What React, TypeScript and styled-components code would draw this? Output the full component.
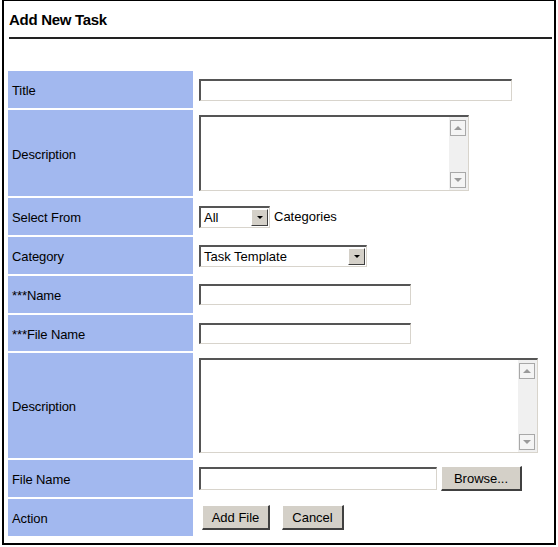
import React from 'react'
import styled, { createGlobalStyle } from 'styled-components'

const GlobalStyle = createGlobalStyle`
  html, body {
    margin: 0;
    padding: 0;
    background: #ffffff;
  }
  body {
    font-family: 'Liberation Sans', Arial, sans-serif;
    color: #000000;
  }
`

const Frame = styled.div`
  box-sizing: border-box;
  width: 554px;
  height: 545px;
  margin-left: 2px;
  border: 2px solid #000000;
  border-top-width: 1px;
  padding: 8px 2px 0 4px;
`

const Header = styled.h1`
  margin: 0 0 0 1px;
  font-size: 15px;
  font-weight: bold;
  line-height: 22px;
  letter-spacing: -0.3px;
`

const Rule = styled.hr`
  margin: 6px 0 0 1px;
  height: 0;
  border: none;
  border-top: 2px solid #222222;
`

const Form = styled.div`
  display: flex;
  flex-direction: column;
  gap: 2px;
  margin-top: 32px;
  width: 545px;
`

const Row = styled.div<{ $h: number }>`
  display: grid;
  grid-template-columns: 185px 1fr;
  column-gap: 2px;
  height: ${({ $h }) => $h}px;
`

const Label = styled.div`
  display: flex;
  align-items: center;
  padding: 2px 0 0 4px;
  background: #a2b8ef;
  font-size: 13px;
  letter-spacing: -0.1px;
`

const Cell = styled.div`
  display: flex;
  align-items: center;
  gap: 4px;
  padding-left: 4px;
  font-size: 13px;
`

const insetBorder = `
  box-sizing: border-box;
  border-top: 2px solid #555555;
  border-left: 2px solid #555555;
  border-right: 1px solid #d8d4cc;
  border-bottom: 1px solid #d8d4cc;
  background: #ffffff;
`

const TextInput = styled.input<{ $w: number; $h?: number }>`
  ${insetBorder}
  width: ${({ $w }) => $w}px;
  height: ${({ $h }) => $h ?? 22}px;
  padding: 0 3px;
  font: inherit;
  outline: none;
`

const AreaBox = styled.div<{ $w: number; $h: number }>`
  ${insetBorder}
  display: flex;
  width: ${({ $w }) => $w}px;
  height: ${({ $h }) => $h}px;
`

const AreaField = styled.textarea`
  flex: 1;
  border: none;
  outline: none;
  resize: none;
  font: inherit;
  padding: 2px;
`

const ScrollTrack = styled.div`
  display: flex;
  flex-direction: column;
  justify-content: space-between;
  width: 17px;
  background: #f0f0f0;
  padding: 3px 1px 2px 1px;
`

const ScrollButton = styled.div`
  display: flex;
  align-items: center;
  justify-content: center;
  box-sizing: border-box;
  width: 16px;
  height: 16px;
  border: 1px solid #a8a8a8;
  background: #f4f4f4;
`

const Arrow = styled.div<{ $up?: boolean }>`
  width: 0;
  height: 0;
  border-left: 4px solid transparent;
  border-right: 4px solid transparent;
  ${({ $up }) =>
    $up ? 'border-bottom: 4px solid #9a9a9a;' : 'border-top: 4px solid #9a9a9a;'}
`

const SelectBox = styled.div<{ $w: number }>`
  ${insetBorder}
  display: flex;
  align-items: center;
  width: ${({ $w }) => $w}px;
  height: 22px;
  padding-left: 3px;
  font-size: 13px;
`

const SelectText = styled.span`
  flex: 1;
`

const DropButton = styled.div`
  display: flex;
  align-items: center;
  justify-content: center;
  box-sizing: border-box;
  width: 17px;
  height: 17px;
  margin-right: 1px;
  background: #d4d0c8;
  border-top: 1px solid #ffffff;
  border-left: 1px solid #ffffff;
  border-right: 1px solid #404040;
  border-bottom: 1px solid #404040;
`

const DropArrow = styled.div`
  width: 0;
  height: 0;
  border-left: 3px solid transparent;
  border-right: 3px solid transparent;
  border-top: 3px solid #000000;
`

const Button = styled.button<{ $w: number }>`
  box-sizing: border-box;
  width: ${({ $w }) => $w}px;
  height: 25px;
  padding: 0;
  background: #d4d0c8;
  border-top: 1px solid #ffffff;
  border-left: 1px solid #ffffff;
  border-right: 2px solid #404040;
  border-bottom: 2px solid #404040;
  font-family: 'Liberation Sans', Arial, sans-serif;
  font-size: 13px;
  color: #000000;
`

const ActionCell = styled(Cell)`
  gap: 12px;
  padding-left: 7px;
`

const TextArea = ({ w, h }: { w: number; h: number }) => (
  <AreaBox $w={w} $h={h}>
    <AreaField />
    <ScrollTrack>
      <ScrollButton>
        <Arrow $up />
      </ScrollButton>
      <ScrollButton>
        <Arrow />
      </ScrollButton>
    </ScrollTrack>
  </AreaBox>
)

const Select = ({ w, value }: { w: number; value: string }) => (
  <SelectBox $w={w}>
    <SelectText>{value}</SelectText>
    <DropButton>
      <DropArrow />
    </DropButton>
  </SelectBox>
)

export default function App() {
  return (
    <>
      <GlobalStyle />
      <Frame>
        <Header>Add New Task</Header>
        <Rule />
        <Form>
          <Row $h={37}>
            <Label>Title</Label>
            <Cell>
              <TextInput $w={313} />
            </Cell>
          </Row>
          <Row $h={86}>
            <Label>Description</Label>
            <Cell>
              <TextArea w={270} h={76} />
            </Cell>
          </Row>
          <Row $h={37}>
            <Label>Select From</Label>
            <Cell>
              <Select w={71} value="All" />
              <span>Categories</span>
            </Cell>
          </Row>
          <Row $h={37}>
            <Label>Category</Label>
            <Cell>
              <Select w={168} value="Task Template" />
            </Cell>
          </Row>
          <Row $h={37}>
            <Label>***Name</Label>
            <Cell>
              <TextInput $w={212} $h={21} />
            </Cell>
          </Row>
          <Row $h={36}>
            <Label>***File Name</Label>
            <Cell>
              <TextInput $w={212} $h={21} />
            </Cell>
          </Row>
          <Row $h={105}>
            <Label>Description</Label>
            <Cell>
              <TextArea w={339} h={95} />
            </Cell>
          </Row>
          <Row $h={37}>
            <Label>File Name</Label>
            <Cell>
              <TextInput $w={238} $h={23} />
              <Button $w={81}>Browse...</Button>
            </Cell>
          </Row>
          <Row $h={37}>
            <Label>Action</Label>
            <ActionCell>
              <Button $w={68}>Add File</Button>
              <Button $w={62}>Cancel</Button>
            </ActionCell>
          </Row>
        </Form>
      </Frame>
    </>
  )
}
